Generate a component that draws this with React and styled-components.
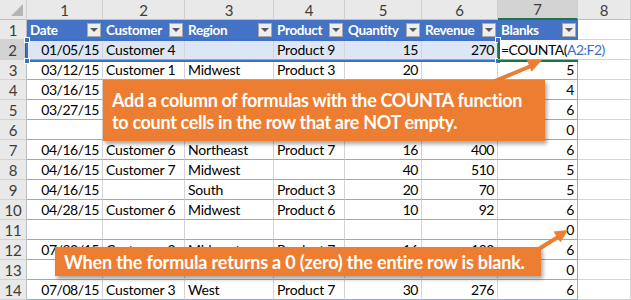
import React from "react";
import styled, { createGlobalStyle } from "styled-components";

const GlobalStyle = createGlobalStyle`
  body {
    margin: 0;
    background: #fff;
    overflow: hidden;
  }
`;

const columns = ["Date", "Customer", "Region", "Product", "Quantity", "Revenue", "Blanks"];

// rows 4 and 5 sit under the big callout, only date and count show
const rows = [
    ["01/05/15", "Customer 4", "", "Product 9", "15", "270", "formula"],
    ["03/12/15", "Customer 1", "Midwest", "Product 3", "20", "", "5"],
    ["03/16/15", "", "", "", "", "", "4"],
    ["03/27/15", "", "", "", "", "", "6"],
    ["", "", "", "", "", "", "0"],
    ["04/16/15", "Customer 6", "Northeast", "Product 7", "16", "400", "6"],
    ["04/16/15", "Customer 7", "Midwest", "", "40", "510", "5"],
    ["04/16/15", "", "South", "Product 3", "20", "70", "5"],
    ["04/28/15", "Customer 6", "Midwest", "Product 6", "10", "92", "6"],
    ["", "", "", "", "", "", "0"],
    ["07/02/15", "Customer 2", "Midwest", "Product 7", "16", "192", "6"],
    ["", "", "", "", "", "", "0"],
    ["07/08/15", "Customer 3", "West", "Product 7", "30", "276", "6"],
];

// which columns hold numbers / dates (right aligned)
const rightCols = [true, false, false, false, true, true, true];

function App() {
    return (
        <>
            <GlobalStyle />
            <Sheet>
                <Grid>
                    <Corner />
                    {[1, 2, 3, 4, 5, 6, 7, 8].map((n) => (
                        <ColHead key={n} $active={n === 7}>{n}</ColHead>
                    ))}

                    <RowHead>1</RowHead>
                    {columns.map((c) => (
                        <HeadCell key={c}>
                            <span>{c}</span>
                            <FilterButton />
                        </HeadCell>
                    ))}
                    <Cell $outside />

                    {rows.map((r, i) => (
                        <React.Fragment key={i}>
                            <RowHead $active={i === 0}>{i + 2}</RowHead>
                            {r.map((v, j) => {
                                if (v === "formula") {
                                    return (
                                        <FormulaCell key={j}>
                                            =COUNTA(<Ref>A2:F2)</Ref>
                                        </FormulaCell>
                                    );
                                }
                                return (
                                    <Cell
                                        key={j}
                                        $right={rightCols[j]}
                                        $band={i === 0}
                                        $edge={j === 6}
                                    >
                                        {v}
                                    </Cell>
                                );
                            })}
                            <Cell $outside />
                        </React.Fragment>
                    ))}
                </Grid>

                <RangeBox>
                    <Handle style={{ left: -4, top: -4 }} />
                    <Handle style={{ left: -4, bottom: -4 }} />
                    <Handle style={{ right: -4, top: -4 }} />
                    <Handle style={{ right: -4, bottom: -4 }} />
                </RangeBox>
                <ActiveCell />

                <Arrows viewBox="0 0 631 300" width="631" height="300">
                    <line x1="488" y1="84" x2="531" y2="66" stroke="#ED7D31" strokeWidth="4" />
                    <polygon points="542,60 531.6,71.7 526.4,58.8" fill="#ED7D31" />
                    <line x1="534" y1="252" x2="558" y2="237" stroke="#ED7D31" strokeWidth="4" />
                    <polygon points="568,230 560.4,242.4 553.5,231.4" fill="#ED7D31" />
                </Arrows>

                <Callout $top={80} $left={103} $width={442} $height={61} $spacing={-0.32}>
                    Add a column of formulas with the COUNTA function<br />
                    to count cells in the row that are NOT empty.
                </Callout>
                <Callout $top={247} $left={55} $width={486} $height={29} $spacing={-0.17}>
                    When the formula returns a 0 (zero) the entire row is blank.
                </Callout>
            </Sheet>
        </>
    );
}

const Sheet = styled.div`
    position: relative;
    width: 631px;
    height: 300px;
    overflow: hidden;
    font-family: Lato, "Liberation Sans", sans-serif;
    font-size: 14px;
    letter-spacing: -0.2px;
    color: #000;
`;

const Grid = styled.div`
    display: grid;
    grid-template-columns: 27px 76px 82px 89px 71px 77px 76px 80px 53px;
    grid-template-rows: 20px;
    grid-auto-rows: 20px;
`;

const Corner = styled.div`
    position: relative;
    background: #e9e9e9;
    border-right: 1px solid #cfcfcf;
    border-bottom: 1px solid #bdbdbd;
    box-sizing: border-box;

    &::after {
        content: "";
        position: absolute;
        right: 3px;
        bottom: 3px;
        border-left: 12px solid transparent;
        border-bottom: 12px solid #b5b5b5;
    }
`;

const ColHead = styled.div`
    display: flex;
    align-items: center;
    justify-content: center;
    box-sizing: border-box;
    background: ${(p) => (p.$active ? "#d3d3d3" : "#e9e9e9")};
    border-right: 1px solid #cfcfcf;
    border-bottom: ${(p) => (p.$active ? "2px solid #217346" : "1px solid #bdbdbd")};
    color: #3c3c3c;
    font-size: 15px;
`;

const RowHead = styled.div`
    display: flex;
    align-items: center;
    justify-content: center;
    box-sizing: border-box;
    background: ${(p) => (p.$active ? "#d3d3d3" : "#e9e9e9")};
    border-right: ${(p) => (p.$active ? "2px solid #217346" : "1px solid #bdbdbd")};
    border-bottom: 1px solid #c9d3e6;
    color: #3c3c3c;
    font-size: 15px;
`;

const HeadCell = styled.div`
    display: flex;
    align-items: center;
    justify-content: space-between;
    gap: 2px;
    box-sizing: border-box;
    padding: 0 2px 0 3px;
    background: #4472c4;
    border-bottom: 1px solid #4472c4;
    color: #fff;
    font-weight: 700;
    font-size: 13.5px;
    letter-spacing: -0.35px;
    white-space: nowrap;
    overflow: hidden;
`;

const FilterButton = styled.div`
    position: relative;
    flex: none;
    width: 14px;
    height: 14px;
    box-sizing: border-box;
    background: #eeeeee;
    border: 1px solid #a9a9a9;

    &::after {
        content: "";
        position: absolute;
        left: 2px;
        top: 4px;
        border-left: 4px solid transparent;
        border-right: 4px solid transparent;
        border-top: 4px solid #595959;
    }
`;

const Cell = styled.div`
    display: flex;
    align-items: center;
    justify-content: ${(p) => (p.$right ? "flex-end" : "flex-start")};
    box-sizing: border-box;
    padding: 0 3px;
    white-space: nowrap;
    overflow: hidden;
    letter-spacing: ${(p) => (p.$right ? "-0.45px" : "-0.2px")};
    background: ${(p) => (p.$band ? "#dde6f4" : "transparent")};
    border-right: 1px solid ${(p) => (p.$edge ? "#8ea9db" : "#d4d4d4")};
    border-bottom: 1px solid ${(p) => (p.$outside ? "#d4d4d4" : "#8ea9db")};
`;

const FormulaCell = styled.div`
    position: relative;
    z-index: 1;
    display: flex;
    align-items: center;
    box-sizing: border-box;
    padding: 0 3px;
    white-space: nowrap;
    letter-spacing: -0.5px;
    border-bottom: 1px solid #8ea9db;
`;

const Ref = styled.span`
    color: #3a6fc9;
`;

const RangeBox = styled.div`
    position: absolute;
    left: 26px;
    top: 39px;
    width: 473px;
    height: 23px;
    box-sizing: border-box;
    border: 2px solid #3d6fc6;
    pointer-events: none;
`;

const Handle = styled.div`
    position: absolute;
    width: 6px;
    height: 6px;
    box-sizing: border-box;
    background: #3d6fc6;
    border: 1px solid #fff;
`;

const ActiveCell = styled.div`
    position: absolute;
    left: 498px;
    top: 41px;
    width: 80px;
    height: 21px;
    box-sizing: border-box;
    border-left: 2px solid #217346;
    border-bottom: 2px solid #217346;
    pointer-events: none;
`;

const Arrows = styled.svg`
    position: absolute;
    left: 0;
    top: 0;
    pointer-events: none;
`;

const Callout = styled.div`
    position: absolute;
    top: ${(p) => p.$top}px;
    left: ${(p) => p.$left}px;
    width: ${(p) => p.$width}px;
    height: ${(p) => p.$height}px;
    box-sizing: border-box;
    display: flex;
    flex-direction: column;
    justify-content: center;
    padding: 0 9px;
    background: #ed7d31;
    box-shadow: 2px 3px 4px rgba(0, 0, 0, 0.35);
    color: #fff;
    font-weight: 700;
    font-size: 18px;
    line-height: 22px;
    letter-spacing: ${(p) => p.$spacing}px;
    white-space: nowrap;
`;

export default App
